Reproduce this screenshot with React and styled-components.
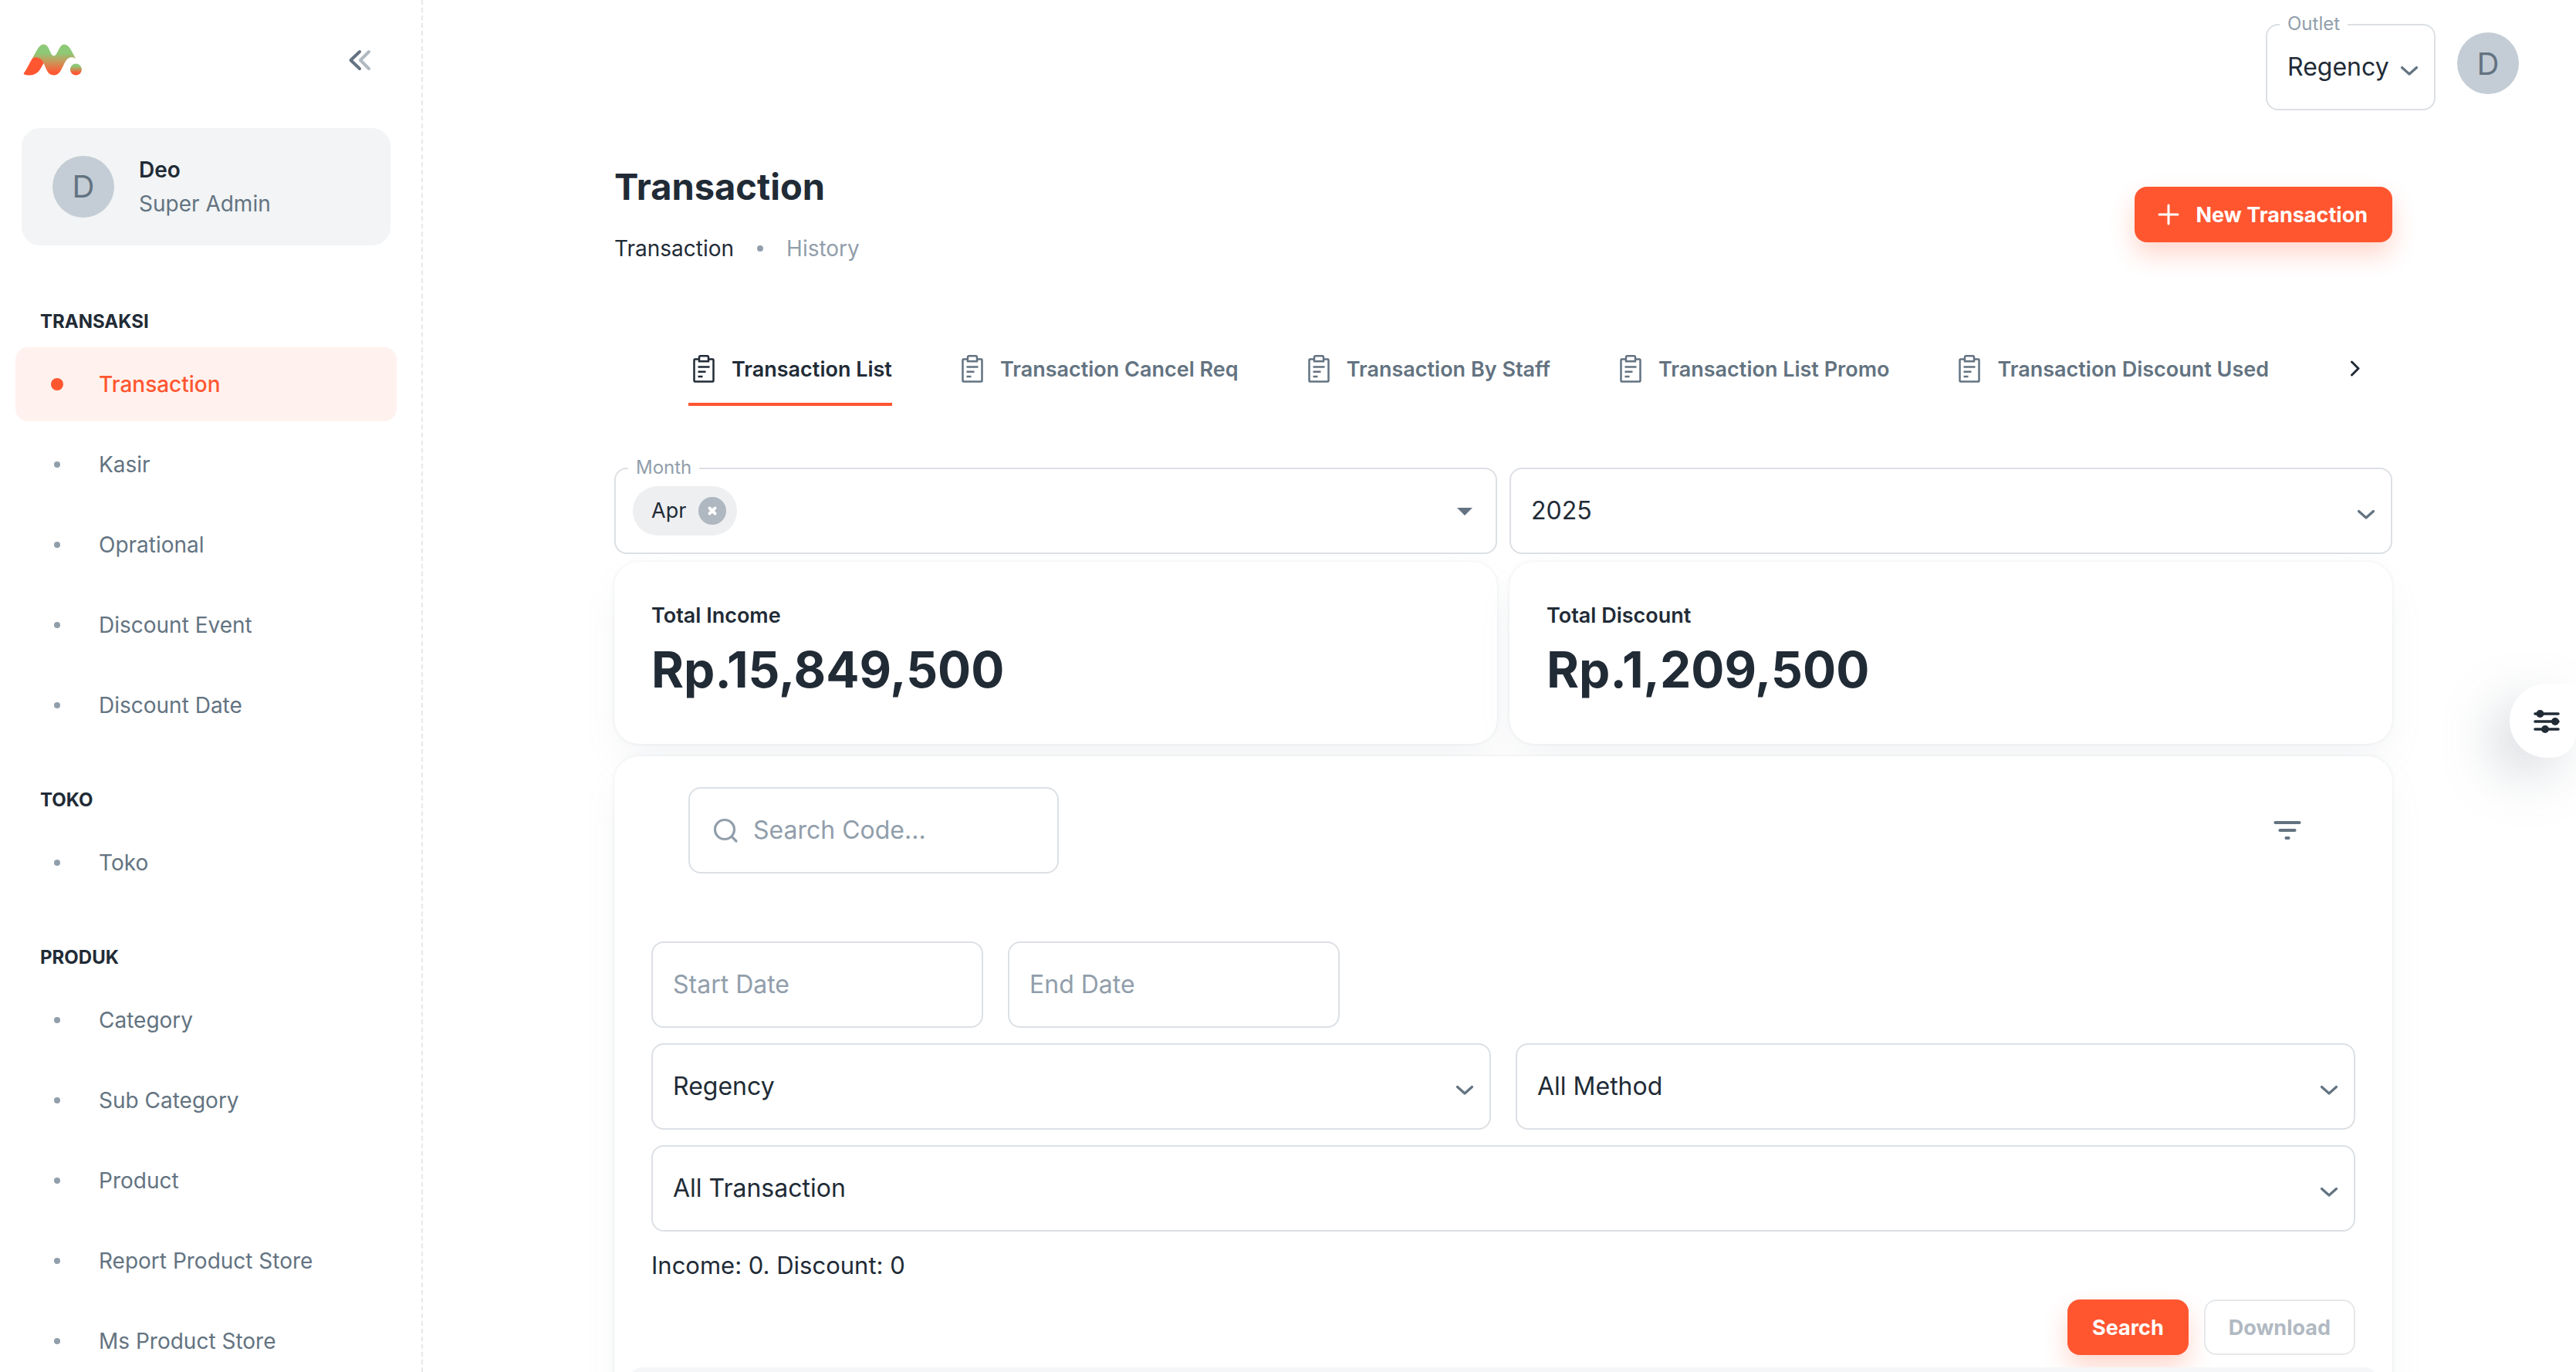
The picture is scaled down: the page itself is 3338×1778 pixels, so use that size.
import React, { useState } from "react";
import styled, { createGlobalStyle, css } from "styled-components";

const colors = {
  text: "#212b36",
  secondary: "#637381",
  disabled: "#919eab",
  primary: "#ff5630",
  border: "#dce0e4",
};

const GlobalStyle = createGlobalStyle`
  *, *::before, *::after {
    box-sizing: border-box;
  }

  body {
    margin: 0;
    background: #fff;
    color: ${colors.text};
    font-family: Inter, "Liberation Sans", sans-serif;
    font-size: 28px;
    line-height: 44px;
  }

  button, input, select {
    font-family: inherit;
    color: inherit;
  }
`;

const menu = [
  {
    title: "Transaksi",
    items: ["Transaction", "Kasir", "Oprational", "Discount Event", "Discount Date"],
  },
  { title: "Toko", items: ["Toko"] },
  {
    title: "Produk",
    items: ["Category", "Sub Category", "Product", "Report Product Store", "Ms Product Store"],
  },
];

const tabs = [
  "Transaction List",
  "Transaction Cancel Req",
  "Transaction By Staff",
  "Transaction List Promo",
  "Transaction Discount Used",
];

const totals = [
  { label: "Total Income", value: "Rp.15,849,500" },
  { label: "Total Discount", value: "Rp.1,209,500" },
];

/* ---------- icons ---------- */

const Logo = () => (
  <svg width="80" height="42" viewBox="-2 0 80 42" aria-label="Logo" role="img">
    <defs>
      <linearGradient id="logoFill" x1="0" y1="0" x2="0" y2="1">
        <stop offset="0.28" stopColor="#8dc977" />
        <stop offset="0.55" stopColor="#c79a5a" />
        <stop offset="0.9" stopColor="#ff5a35" />
      </linearGradient>
      <linearGradient id="dotFill" x1="0" y1="0" x2="0" y2="1">
        <stop offset="0.2" stopColor="#8dc977" />
        <stop offset="0.8" stopColor="#ff5a35" />
      </linearGradient>
    </defs>
    <path
      d="M12 18.500C18 8 20.500 0.500 27 0.500C34 0.500 35 15.500 39.800 15.500C44.500 15.500 46.500 0.500 53 0.500C60 0.500 63 10 68 19C65 17 62 16.500 58.500 18.500C51 24 50.500 40.500 40 40.500C31 40.500 30 31 26.500 25Z"
      fill="url(#logoFill)"
    />
    <path
      d="M0.500 38.500C4.500 33 8 25 12 18.500C15 16.500 24 16.500 26.500 25C22 33.500 18.500 40.500 8 40.500C4.500 40.500 1.500 40 0.500 38.500Z"
      fill="#ff5632"
    />
    <circle cx="68.400" cy="33" r="7.500" fill="url(#dotFill)" />
  </svg>
);

const CollapseIcon = () => (
  <svg width="48" height="48" viewBox="0 0 48 48" fill="none" strokeWidth="4" strokeLinecap="round" strokeLinejoin="round">
    <path d="M36 13L25 24L36 35" stroke="#b1b9c0" />
    <path d="M24 13L12.500 24L24 35" stroke={colors.secondary} />
  </svg>
);

const ClipboardIcon = () => (
  <svg width="40" height="40" viewBox="0 0 40 40" fill="none" stroke="currentColor" strokeWidth="2.500">
    <path d="M13 7.500H8.500Q7.500 7.500 7.500 8.500V35.500Q7.500 36.500 8.500 36.500H31.500Q32.500 36.500 32.500 35.500V8.500Q32.500 7.500 31.500 7.500H27" />
    <path d="M14 5Q14 3.200 15.800 3.200H24.200Q26 3.200 26 5V10.200H14Z" />
    <path d="M12.500 17.500H27.500M12.500 23.700H22.500M12.500 30H18.500" />
  </svg>
);

const ChevronDown = () => (
  <svg width="36" height="36" viewBox="0 0 36 36" fill="none" stroke={colors.secondary} strokeWidth="3.200" strokeLinecap="round" strokeLinejoin="round">
    <path d="M8.500 18.500L18 27L27.500 18.500" />
  </svg>
);

const ChevronRight = () => (
  <svg width="40" height="40" viewBox="0 0 40 40" fill="none" stroke={colors.text} strokeWidth="3" strokeLinecap="round" strokeLinejoin="round">
    <path d="M15.500 11L24 19.500L15.500 28" />
  </svg>
);

const PlusIcon = () => (
  <svg width="40" height="40" viewBox="0 0 40 40" fill="none" stroke="currentColor" strokeWidth="3" strokeLinecap="round">
    <path d="M20 8V32M8 20H32" />
  </svg>
);

const CloseIcon = () => (
  <svg width="36" height="36" viewBox="0 0 36 36">
    <circle cx="18" cy="18" r="18" fill="#afb7c0" />
    <path d="M14.500 14.500L21.500 21.500M21.500 14.500L14.500 21.500" stroke="#fff" strokeWidth="4" strokeLinecap="round" />
  </svg>
);

const CaretIcon = () => (
  <svg width="48" height="48" viewBox="0 0 48 48" fill={colors.secondary}>
    <path d="M14 20L24 30L34 20Z" />
  </svg>
);

const SearchIcon = () => (
  <svg width="40" height="40" viewBox="0 0 40 40" fill="none" stroke={colors.disabled} strokeWidth="3.200" strokeLinecap="round">
    <circle cx="19" cy="19" r="12.500" />
    <path d="M28.500 28.500L34 34" />
  </svg>
);

const FilterIcon = () => (
  <svg width="48" height="48" viewBox="0 0 48 48" fill="none" stroke={colors.secondary} strokeWidth="4.200" strokeLinecap="round">
    <path d="M8.500 14H39.500M14.500 24H33.500M22.500 34H25.500" />
  </svg>
);

const SlidersIcon = () => (
  <svg width="40" height="40" viewBox="0 0 40 40" fill="none" stroke={colors.text} strokeWidth="3.600" strokeLinecap="round">
    <path d="M5 11H35M5 21H35M5 31H35" />
    <g fill={colors.text} stroke="none">
      <circle cx="11.500" cy="11" r="5" />
      <circle cx="31" cy="21" r="5" />
      <circle cx="18" cy="31" r="5" />
    </g>
  </svg>
);

/* ---------- layout ---------- */

const Shell = styled.div`
  display: flex;
  height: 100vh;
  overflow: hidden;
`;

const Sidebar = styled.aside`
  flex: 0 0 548px;
  padding-right: 12px;
  border-right: 2px dashed #e5e8eb;
  overflow: hidden;
`;

const SidebarTop = styled.div`
  display: flex;
  align-items: center;
  justify-content: space-between;
  height: 80px;
  margin: 38px 44px 48px 28px;
`;

const IconButton = styled.button`
  display: flex;
  align-items: center;
  justify-content: center;
  flex: none;
  width: ${({ $size }) => $size}px;
  height: ${({ $size }) => $size}px;
  padding: 0;
  border: 0;
  border-radius: 50%;
  background: transparent;
  cursor: pointer;
`;

const UserCard = styled.a`
  display: flex;
  align-items: center;
  gap: 32px;
  margin: 0 28px 32px;
  padding: 32px 40px;
  border-radius: 24px;
  background: #f2f4f5;
  color: inherit;
  text-decoration: none;
`;

const Avatar = styled.span`
  display: flex;
  align-items: center;
  justify-content: center;
  flex: none;
  width: 80px;
  height: 80px;
  border-radius: 50%;
  background: #c4cdd5;
  color: ${colors.secondary};
  font-size: 40px;
`;

const UserName = styled.div`
  font-weight: 600;
`;

const UserRole = styled.div`
  color: ${colors.secondary};
`;

const NavTitle = styled.h2`
  margin: 0;
  padding: 49px 52px 15px;
  font-size: 24px;
  line-height: 36px;
  font-weight: 700;
  text-transform: uppercase;
`;

const NavList = styled.ul`
  margin: 0;
  padding: 0 20px;
  list-style: none;
`;

const NavLink = styled.a`
  display: flex;
  align-items: center;
  height: 96px;
  margin-bottom: 8px;
  padding-left: 30px;
  border-radius: 16px;
  color: ${colors.secondary};
  text-decoration: none;

  ${({ $active }) =>
    $active &&
    css`
      background: #fff2ee;
      color: ${colors.primary};
      font-weight: 500;
    `}
`;

const NavDot = styled.span`
  display: flex;
  justify-content: center;
  width: 48px;
  margin-right: 30px;

  &::before {
    content: "";
    width: ${({ $active }) => ($active ? 16 : 8)}px;
    height: ${({ $active }) => ($active ? 16 : 8)}px;
    border-radius: 50%;
    background: ${({ $active }) => ($active ? colors.primary : colors.disabled)};
  }
`;

const Main = styled.main`
  flex: 1;
  min-width: 0;
  padding-left: 10px;
  overflow-y: auto;
  scrollbar-width: none;
`;

const TopBar = styled.header`
  display: flex;
  align-items: flex-start;
  justify-content: flex-end;
  gap: 28px;
  padding: 31px 74px 63px 48px;
`;

const AvatarButton = styled(IconButton)`
  margin-top: 11px;
`;

const Container = styled.div`
  max-width: 2304px;
  margin: 0 auto;
`;

const PageHeader = styled.div`
  display: flex;
  align-items: center;
  justify-content: space-between;
  margin-bottom: 80px;
`;

const PageTitle = styled.h1`
  margin: 0 0 16px;
  font-size: 47px;
  line-height: 72px;
  font-weight: 700;
`;

const Breadcrumbs = styled.nav`
  display: flex;
  align-items: center;
  gap: 30px;
  line-height: 56px;
  color: ${colors.disabled};

  a {
    color: ${colors.text};
    text-decoration: none;
  }
`;

const Separator = styled.span`
  width: 8px;
  height: 8px;
  border-radius: 50%;
  background: ${colors.disabled};
`;

const Button = styled.button`
  display: inline-flex;
  align-items: center;
  gap: 16px;
  height: 72px;
  padding: 0 32px;
  border: 0;
  border-radius: 16px;
  background: ${colors.primary};
  color: #fff;
  font-size: 27px;
  font-weight: 700;
  box-shadow: 0 16px 32px rgba(255, 86, 48, 0.24);
  cursor: pointer;

  svg {
    margin-left: -8px;
  }
`;

const OutlineButton = styled(Button)`
  padding: 0 30px;
  border: 2px solid #e5e8eb;
  background: #fff;
  color: #b1b9c2;
  box-shadow: none;
`;

const TabBar = styled.div`
  display: flex;
  align-items: center;
  margin-bottom: 80px;
  padding-left: 96px;
`;

const TabList = styled.div`
  display: flex;
  flex: 1;
  gap: 84px;
  min-width: 0;
  overflow: hidden;
`;

const Tab = styled.button`
  display: flex;
  align-items: center;
  flex: none;
  gap: 16px;
  height: 96px;
  padding: 4px 0 0;
  border: 0;
  border-bottom: 4px solid ${({ $active }) => ($active ? colors.primary : "transparent")};
  background: transparent;
  color: ${({ $active }) => ($active ? colors.text : colors.secondary)};
  font-size: 27px;
  font-weight: 600;
  white-space: nowrap;
  cursor: pointer;
`;

const Columns = styled.div`
  display: grid;
  grid-template-columns: 1fr 1fr;
  gap: ${({ $gap }) => $gap}px;
`;

/* ---------- fields ---------- */

const FieldBox = styled.div`
  position: relative;
  display: flex;
  align-items: center;
  min-width: 0;
  height: 112px;
  border: 2px solid ${colors.border};
  border-radius: 16px;
  background: #fff;
  font-size: 32px;
`;

const FieldLabel = styled.label`
  position: absolute;
  top: -20px;
  left: 16px;
  padding: 0 10px;
  background: #fff;
  color: ${colors.disabled};
  font-size: 24px;
  line-height: 36px;
`;

const NativeSelect = styled.select`
  width: 100%;
  height: 100%;
  padding: 0 58px 2px 26px;
  border: 0;
  border-radius: 16px;
  outline: 0;
  appearance: none;
  background: transparent;
  font-size: 32px;
`;

const SelectArrow = styled.span`
  position: absolute;
  right: 14px;
  display: flex;
  pointer-events: none;
`;

const TextInput = styled.input`
  flex: 1;
  min-width: 0;
  height: 100%;
  padding: 0 26px 2px;
  border: 0;
  border-radius: 16px;
  outline: 0;
  background: transparent;
  font-size: 32px;

  &::placeholder {
    color: ${colors.disabled};
    opacity: 1;
  }
`;

const MonthBox = styled(FieldBox)`
  padding: 0 16px 0 22px;
`;

const Chip = styled.span`
  display: flex;
  align-items: center;
  gap: 16px;
  height: 64px;
  padding: 0 14px 0 24px;
  border-radius: 32px;
  background: #eeeff1;
  font-size: 27px;
`;

const SearchBox = styled(FieldBox)`
  width: 480px;
  padding-left: 26px;

  input {
    padding-left: 16px;
  }
`;

const DateBox = styled(FieldBox)`
  width: 430px;
`;

/* ---------- cards ---------- */

const Card = styled.section`
  position: relative;
  border-radius: 32px;
  background: #fff;
  box-shadow: 0 0 4px rgba(145, 158, 171, 0.2), 0 24px 48px -8px rgba(145, 158, 171, 0.12);
`;

const Totals = styled(Columns)`
  margin: 10px 0 16px;
`;

const TotalCard = styled(Card)`
  padding: 48px;
`;

const TotalLabel = styled.div`
  font-size: 27px;
  font-weight: 600;
`;

const TotalValue = styled.div`
  font-size: 64px;
  line-height: 96px;
  font-weight: 700;
`;

const ListCard = styled(Card)`
  padding-top: 40px;
`;

const Toolbar = styled.div`
  display: flex;
  align-items: center;
  justify-content: space-between;
  padding: 0 96px;
`;

const FilterForm = styled.form`
  display: flex;
  flex-direction: column;
  gap: 20px;
  padding: 88px 48px 16px;
`;

const DateRow = styled.div`
  display: flex;
  gap: 32px;
`;

const Summary = styled.p`
  margin: 0;
  font-size: 31px;
  line-height: 48px;
`;

const Actions = styled.div`
  display: flex;
  justify-content: flex-end;
  gap: 20px;
`;

const TableHeadBar = styled.div`
  position: relative;
  height: 112px;
  margin: 0 20px;
  border-radius: 16px;
  background: #f4f6f8;
`;

const SettingsToggle = styled.button`
  position: fixed;
  top: 886px;
  right: 0;
  display: flex;
  align-items: center;
  width: 86px;
  height: 96px;
  padding: 0 0 0 28px;
  border: 0;
  border-radius: 48px 0 32px 48px;
  background: #fff;
  box-shadow: -24px 24px 72px -8px rgba(99, 115, 129, 0.36);
  cursor: pointer;
`;

const SelectField = ({ id, label, hiddenLabel, options }) => (
  <FieldBox>
    {label && <FieldLabel htmlFor={id}>{label}</FieldLabel>}
    <NativeSelect id={id} aria-label={hiddenLabel}>
      {options.map((option) => (
        <option key={option}>{option}</option>
      ))}
    </NativeSelect>
    <SelectArrow>
      <ChevronDown />
    </SelectArrow>
  </FieldBox>
);

const App = () => {
  const [page, setPage] = useState("Transaction");
  const [tab, setTab] = useState(tabs[0]);

  return (
    <>
      <GlobalStyle />
      <Shell>
        <Sidebar>
          <SidebarTop>
            <Logo />
            <IconButton $size={48} aria-label="Collapse menu">
              <CollapseIcon />
            </IconButton>
          </SidebarTop>
          <UserCard href="#">
            <Avatar>D</Avatar>
            <div>
              <UserName>Deo</UserName>
              <UserRole>Super Admin</UserRole>
            </div>
          </UserCard>
          <nav>
            {menu.map((group) => (
              <div key={group.title}>
                <NavTitle>{group.title}</NavTitle>
                <NavList>
                  {group.items.map((item) => (
                    <li key={item}>
                      <NavLink href="#" $active={item === page} onClick={() => setPage(item)}>
                        <NavDot $active={item === page} />
                        {item}
                      </NavLink>
                    </li>
                  ))}
                </NavList>
              </div>
            ))}
          </nav>
        </Sidebar>

        <Main>
          <TopBar>
            <SelectField id="outlet" label="Outlet" options={["Regency"]} />
            <AvatarButton $size={80} aria-label="Account">
              <Avatar>D</Avatar>
            </AvatarButton>
          </TopBar>

          <Container>
            <PageHeader>
              <div>
                <PageTitle>Transaction</PageTitle>
                <Breadcrumbs>
                  <a href="#">Transaction</a>
                  <Separator />
                  <span>History</span>
                </Breadcrumbs>
              </div>
              <Button>
                <PlusIcon />
                New Transaction
              </Button>
            </PageHeader>

            <TabBar>
              <TabList role="tablist">
                {tabs.map((name) => (
                  <Tab
                    key={name}
                    role="tab"
                    aria-selected={name === tab}
                    $active={name === tab}
                    onClick={() => setTab(name)}>
                    <ClipboardIcon />
                    {name}
                  </Tab>
                ))}
              </TabList>
              <IconButton $size={96} aria-label="Next tabs">
                <ChevronRight />
              </IconButton>
            </TabBar>

            <Columns $gap={16}>
              <MonthBox>
                <FieldLabel htmlFor="month">Month</FieldLabel>
                <Chip>
                  Apr
                  <IconButton $size={36} aria-label="Remove Apr">
                    <CloseIcon />
                  </IconButton>
                </Chip>
                <TextInput id="month" />
                <IconButton $size={48} aria-label="Open months">
                  <CaretIcon />
                </IconButton>
              </MonthBox>
              <SelectField id="year" hiddenLabel="Year" options={["2025"]} />
            </Columns>

            <Totals $gap={16}>
              {totals.map(({ label, value }) => (
                <TotalCard key={label}>
                  <TotalLabel>{label}</TotalLabel>
                  <TotalValue>{value}</TotalValue>
                </TotalCard>
              ))}
            </Totals>

            <ListCard>
              <Toolbar>
                <SearchBox>
                  <SearchIcon />
                  <TextInput aria-label="Search code" placeholder="Search Code..." />
                </SearchBox>
                <IconButton $size={80} aria-label="Filter list">
                  <FilterIcon />
                </IconButton>
              </Toolbar>

              <FilterForm onSubmit={(event) => event.preventDefault()}>
                <DateRow>
                  <DateBox>
                    <TextInput aria-label="Start date" placeholder="Start Date" />
                  </DateBox>
                  <DateBox>
                    <TextInput aria-label="End date" placeholder="End Date" />
                  </DateBox>
                </DateRow>
                <Columns $gap={32}>
                  <SelectField id="store" hiddenLabel="Store" options={["Regency"]} />
                  <SelectField id="method" hiddenLabel="Method" options={["All Method"]} />
                </Columns>
                <SelectField id="type" hiddenLabel="Transaction type" options={["All Transaction"]} />
                <Summary>Income: 0. Discount: 0</Summary>
                <Actions>
                  <Button type="submit">Search</Button>
                  <OutlineButton type="button" disabled>
                    Download
                  </OutlineButton>
                </Actions>
              </FilterForm>
              <TableHeadBar />
            </ListCard>
          </Container>
        </Main>
      </Shell>
      <SettingsToggle aria-label="Settings">
        <SlidersIcon />
      </SettingsToggle>
    </>
  );
};

export default App;
